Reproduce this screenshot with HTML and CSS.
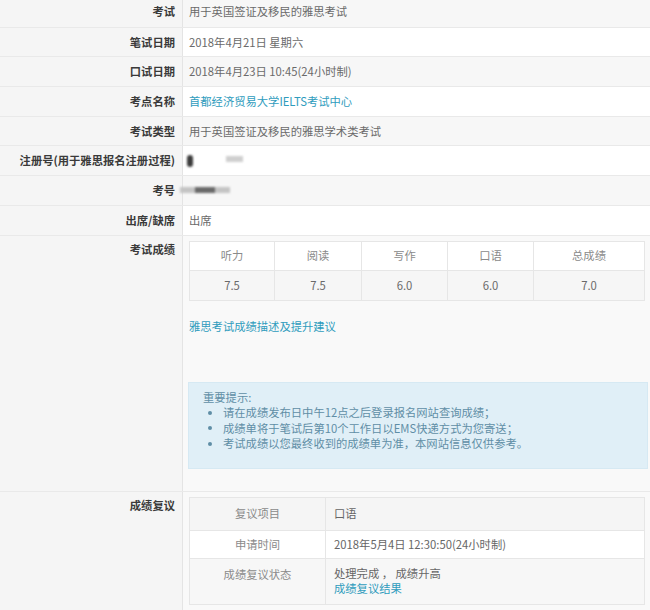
FILE: index.html
```html
<!DOCTYPE html>
<html lang="zh-CN">
<head>
<meta charset="utf-8">
<title>雅思成绩</title>
<link rel="stylesheet" href="styles.css">
</head>
<body>
<div class="sheet">
  <div class="row alt">
    <div class="label">考试</div>
    <div class="value">用于英国签证及移民的雅思考试</div>
  </div>
  <div class="row">
    <div class="label">笔试日期</div>
    <div class="value">2018年4月21日 星期六</div>
  </div>
  <div class="row alt">
    <div class="label">口试日期</div>
    <div class="value">2018年4月23日 10:45(24小时制)</div>
  </div>
  <div class="row">
    <div class="label">考点名称</div>
    <div class="value"><a class="link" href="#">首都经济贸易大学IELTS考试中心</a></div>
  </div>
  <div class="row alt">
    <div class="label">考试类型</div>
    <div class="value">用于英国签证及移民的雅思学术类考试</div>
  </div>
  <div class="row">
    <div class="label">注册号(用于雅思报名注册过程)</div>
    <div class="value"><span class="blur-dark"></span><span class="blur-light"></span></div>
  </div>
  <div class="row alt">
    <div class="label">考号</div>
    <div class="value"><span class="blur-bar"><span class="blur-core"></span></span></div>
  </div>
  <div class="row">
    <div class="label">出席/缺席</div>
    <div class="value">出席</div>
  </div>
  <div class="row tall">
    <div class="label">考试成绩</div>
    <div class="value block score-cell">
      <table class="scores">
        <tr class="head">
          <td class="c1">听力</td><td class="c2">阅读</td><td class="c3">写作</td><td class="c4">口语</td><td>总成绩</td>
        </tr>
        <tr class="data">
          <td>7.5</td><td>7.5</td><td>6.0</td><td>6.0</td><td>7.0</td>
        </tr>
      </table>
      <a class="link score-link" href="#">雅思考试成绩描述及提升建议</a>
      <div class="notice">
        <div class="notice-title">重要提示:</div>
        <ul>
          <li>请在成绩发布日中午12点之后登录报名网站查询成绩；</li>
          <li>成绩单将于笔试后第10个工作日以EMS快递方式为您寄送；</li>
          <li>考试成绩以您最终收到的成绩单为准，本网站信息仅供参考。</li>
        </ul>
      </div>
    </div>
  </div>
  <div class="row tall">
    <div class="label">成绩复议</div>
    <div class="value block review-cell">
      <table class="review">
        <tr class="r1"><td class="k">复议项目</td><td class="v">口语</td></tr>
        <tr class="r2"><td class="k">申请时间</td><td class="v">2018年5月4日 12:30:50(24小时制)</td></tr>
        <tr class="r3"><td class="k">成绩复议状态</td><td class="v">处理完成 ， 成绩升高<br><a class="link" href="#">成绩复议结果</a></td></tr>
      </table>
    </div>
  </div>
</div>
</body>
</html>
```

FILE: styles.css
```css
* { box-sizing: border-box; }

body {
  margin: 0;
  background: #f9f9f9;
  font-family: "Noto Sans CJK SC", "Noto Sans", sans-serif;
  font-size: 11.3px;
  line-height: 15px;
  color: #6a6a6a;
}

.sheet {
  margin-top: -3px;
}

.row {
  display: grid;
  grid-template-columns: 183px 1fr;
  height: 29.7px;
  border-top: 1px solid #e9e9e9;
}

.row:first-child {
  border-top: none;
  height: 29.7px;
}

.label {
  background: #f5f5f5;
  border-right: 1px solid #e4e4e4;
  padding-right: 7px;
  display: flex;
  align-items: center;
  justify-content: flex-end;
  font-weight: bold;
  color: #3a3a3a;
  white-space: nowrap;
}

.value {
  background: #fff;
  padding-left: 6px;
  display: flex;
  align-items: center;
}

.row.alt .value {
  background: #f7f7f7;
}

.link {
  color: #2f9cbd;
  text-decoration: none;
}

/* redacted values */
.blur-dark {
  display: inline-block;
  width: 6px;
  height: 12px;
  margin-left: -2px;
  background: #3c3c3c;
  border-radius: 3px;
  filter: blur(1px);
}

.blur-light {
  display: inline-block;
  width: 17px;
  height: 6px;
  margin-left: 33px;
  margin-top: -3px;
  background: #cfcfcf;
  filter: blur(0.8px);
}

.blur-bar {
  display: flex;
  align-items: center;
  justify-content: center;
  width: 50px;
  height: 6px;
  margin-left: -9px;
  background: #c4c4c4;
  filter: blur(1px);
}

.blur-core {
  display: block;
  width: 20px;
  height: 6px;
  background: #6a6a6a;
}

/* tall rows */
.row.tall {
  height: auto;
}

.row.tall .label {
  align-items: flex-start;
  padding-top: 6px;
}

.value.block {
  display: block;
  background: #f9f9f9;
  padding: 5px 5px 0 6px;
}

.score-cell {
  padding-bottom: 22px !important;
}

table {
  border-collapse: collapse;
  width: 100%;
}

.scores td {
  border: 1px solid #e6e6e6;
  text-align: center;
  height: 29.5px;
  padding: 0;
}

.scores .head td {
  background: #fff;
  color: #8a8a8a;
}

.scores .data td {
  background: #f6f6f6;
  color: #6a6a6a;
}

.scores .c1 { width: 85px; }
.scores .c2 { width: 87px; }
.scores .c3 { width: 86px; }
.scores .c4 { width: 86px; }

.score-link {
  display: block;
  margin-top: 18px;
}

.notice {
  margin-top: 48px;
  margin-left: -1px;
  margin-right: -3px;
  background: #e0eff7;
  border: 1px solid #d6e9f3;
  padding: 7px 14px 16px;
  color: #5f8ea6;
  line-height: 15.5px;
}

.notice ul {
  margin: 0;
  padding: 0;
  list-style: none;
}

.notice li {
  display: flex;
  align-items: center;
  padding-left: 5px;
}

.notice li::before {
  content: "";
  display: block;
  width: 4px;
  height: 4px;
  border-radius: 50%;
  background: #5f8ea6;
  margin-right: 11px;
  flex: none;
}

.review-cell {
  padding-bottom: 12px !important;
}

.review td {
  border: 1px solid #e6e6e6;
  padding: 0;
}

.review .k {
  width: 136px;
  text-align: center;
  color: #8a8a8a;
}

.review .v {
  padding-left: 8px;
  color: #666;
}

.review .r1 td { height: 33px; background: #f5f5f5; }
.review .r2 td { height: 28px; background: #fff; }
.review .r3 td { height: 46px; background: #f7f7f7; }
.review .r3 .k { vertical-align: top; padding-top: 8px; }
```
